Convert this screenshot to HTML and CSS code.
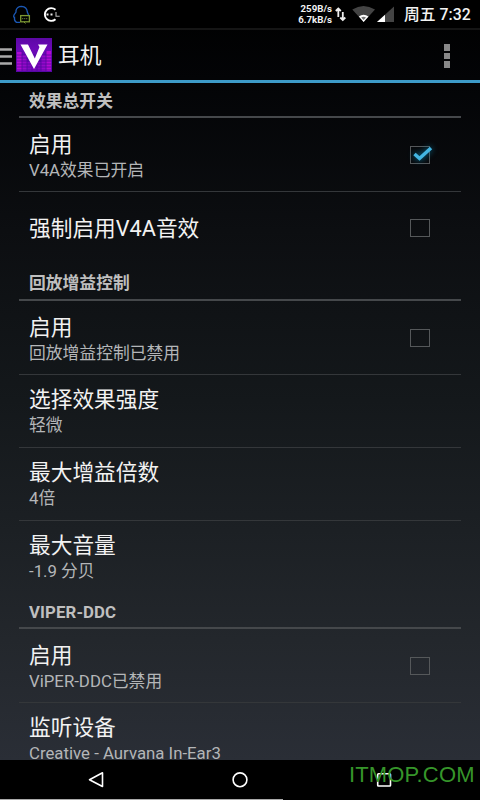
FILE: index.html
```html
<!DOCTYPE html>
<html lang="zh-CN">
<head>
<meta charset="utf-8">
<title>耳机</title>
<link rel="stylesheet" href="styles.css">
</head>
<body>
<div class="screen">
  <header class="status">
    <svg class="notices" width="64" height="28" viewBox="0 0 64 28" fill="none">
      <path d="M20 22.300H16.500Q14 21 14.500 17.500Q13.200 17.500 14 15L16 12V10.500Q17 6.300 21.500 6.300Q27 6.800 27.300 12L28.600 15" stroke="#1b58b5" stroke-width="1.300"/>
      <rect x="20.700" y="15.600" width="8.700" height="6.200" stroke="#7c9833" stroke-width="1.300"/>
      <path d="M22 18.700h6" stroke="#657d31" stroke-dasharray="1.300 .7"/>
      <path d="M24 22l1.500 1.500" stroke="#7c9833"/>
      <path d="M55.500 9.700A6.400 6.400 0 1 0 55.500 19.300" stroke="#fff" stroke-width="1.900"/>
      <path d="M46.500 14.500h2M50.500 14.500h2" stroke="#eee" stroke-width="2"/>
      <path d="M56 12v4.300h3.700" stroke="#bbb" stroke-width="1.100"/>
    </svg>
    <div class="rate"><span>259B/s</span><span>6.7kB/s</span></div>
    <svg class="signals" width="62" height="28" viewBox="0 0 62 28">
      <path d="M5.300 17V9M2.800 11L5.300 8.500l2.500 2.500M9.800 12v8M7.300 17.500L9.800 20l2.500-2.500" fill="none" stroke="#eee" stroke-width="1.800"/>
      <path d="M19.300 9.600Q30.500 2.400 42 9.600L30.600 22z" fill="#444"/>
      <path d="M25.800 16.500Q30.600 12.800 35.500 16.500L30.600 22z" fill="#fff"/>
      <path d="M28.200 17.600Q30.600 16 33 17.600L30.600 20z" fill="#777"/>
      <path d="M61 6.500V22H44z" fill="#444"/>
      <path d="M52 14.700V22H44z" fill="#fff"/>
    </svg>
    <div class="clock">周五 7:32</div>
  </header>
  <div class="actionbar">
    <svg width="52" height="50" viewBox="0 0 52 50">
      <defs><linearGradient id="g" x2="0" y2="1"><stop stop-color="#5c08a5"/><stop offset=".35" stop-color="#6c09b8"/><stop offset="1" stop-color="#5608a5"/></linearGradient></defs>
      <path d="M0 19.500h12M0 26.500h12M0 33.500h12" stroke="#aaa" stroke-width="2.300"/>
      <rect x="16" y="8" width="36" height="34" fill="url(#g)"/>
      <path d="M17 22h5v19h-5zM46 21h5v20h-5z" fill="#b30bd3"/>
      <path d="M22 25h5v16h-5zM41 25h5v16h-5z" fill="#9509ca"/>
      <path d="M27 32h14v9H27z" fill="#8208c1"/>
      <path d="M16 25h36M16 28h36M16 31h36M16 34h36M16 37h36M16 40h36M22 21v20M27 25v16M32 35v6M37 35v6M41 25v16M46 21v20" stroke="#53099e" stroke-width=".8"/>
      <path d="M20.500 14.500H28L34.800 28.500L39.500 17L38 14.500H47.500L34 39z" fill="#fff"/>
    </svg>
    <h1>耳机</h1>
    <div class="more"><i></i><i></i><i></i></div>
  </div>
  <main class="list">
    <h2>效果总开关</h2>
    <section class="row"><div><h3>启用</h3><p>V4A效果已开启</p></div>
      <span class="box"><svg class="tick" width="28" height="24" viewBox="0 0 28 24"><path d="M6.500 13L11.500 17.500L23 7" fill="none" stroke="#43b5e2" stroke-width="3.500"/></svg></span>
    </section>
    <section class="row"><div><h3>强制启用V4A音效</h3></div><span class="box"></span></section>
    <h2 class="gain">回放增益控制</h2>
    <section class="row"><div><h3>启用</h3><p>回放增益控制已禁用</p></div><span class="box"></span></section>
    <section class="row"><div><h3>选择效果强度</h3><p>轻微</p></div></section>
    <section class="row"><div><h3>最大增益倍数</h3><p>4倍</p></div></section>
    <section class="row"><div><h3>最大音量</h3><p>-1.9 分贝</p></div></section>
    <h2 class="ddc">VIPER-DDC</h2>
    <section class="row"><div><h3>启用</h3><p>ViPER-DDC已禁用</p></div><span class="box"></span></section>
    <section class="row"><div><h3>监听设备</h3><p>Creative - Aurvana In-Ear3</p></div></section>
  </main>
  <nav class="nav">
    <svg width="480" height="40" viewBox="0 0 480 40" fill="none" stroke="#fff" stroke-width="1.600">
      <path d="M102.500 12.800V26.500L89.500 19.700z" stroke-linejoin="round"/>
      <circle cx="240" cy="19.800" r="6.900"/>
      <rect x="377.700" y="13.700" width="12.800" height="12.300" rx=".8"/>
      <path d="M0 39.500h283" stroke="#aaa" stroke-width="1"/>
    </svg>
    <span class="watermark">ITMOP.COM</span>
  </nav>
</div>
</body>
</html>
```

FILE: styles.css
```css
* { box-sizing: border-box; }
body, h1, h2, h3, p { margin: 0; }
body {
  width: 480px;
  height: 800px;
  overflow: hidden;
  background: #000;
  color: #f2f2f2;
  font-family: Roboto, "Noto Sans CJK SC", sans-serif;
}
.screen {
  height: 800px;
  display: flex;
  flex-direction: column;
  background: linear-gradient(#000 0, #030406 80px, #0c0e11 230px, #14181b 400px, #1c2024 530px, #23272c 640px, #2a2e36 760px);
}
.status {
  height: 30px;
  flex: none;
  display: flex;
  background: #000;
  border-bottom: 2px solid #151515;
}
.rate {
  width: 268px;
  padding-top: 4px;
  display: flex;
  flex-direction: column;
  align-items: flex-end;
  font-size: 9.7px;
  line-height: 10.5px;
  font-weight: 700;
}
.signals { margin-left: 1px; flex: none; }
.clock {
  margin-left: 9px;
  font-size: 15.8px;
  line-height: 29px;
  font-weight: 500;
  white-space: nowrap;
}
.actionbar {
  height: 53px;
  flex: none;
  display: flex;
  border-bottom: 3px solid #3d9bc8;
}
.actionbar h1 {
  flex: 1;
  margin-left: 6px;
  font-size: 21.7px;
  line-height: 51px;
  font-weight: 400;
}
.more {
  width: 6px;
  margin: 14px 30px 0 0;
  display: flex;
  flex-direction: column;
  gap: 2px;
}
.more i { height: 6.500px; background: #888; }
.list {
  height: 677px;
  flex: none;
  padding: 0 19px;
  overflow: hidden;
}
.list h2 {
  height: 35px;
  padding-left: 10px;
  border-bottom: 2px solid #45484b;
  color: #bfbfbf;
  font-size: 16.8px;
  line-height: 36px;
  font-weight: 700;
}
.list .gain { height: 37px; line-height: 38px; }
.list .ddc { height: 36px; line-height: 38px; letter-spacing: .1px; }
.row {
  height: 73px;
  padding: 0 31px 0 10px;
  display: flex;
  align-items: center;
  justify-content: space-between;
}
.row + .row { border-top: 1px solid #34373a; }
.row h3 {
  font-size: 21.7px;
  line-height: 28px;
  font-weight: 400;
}
h2 + .row h3 { padding-top: 2px; }
.row h3:only-child { padding-top: 1px; }
.row p {
  color: #b4b6b8;
  font-size: 16.8px;
  line-height: 22px;
}
.box {
  position: relative;
  width: 20px;
  height: 18px;
  border: 1px solid #55585a;
}
.tick {
  position: absolute;
  left: -3px;
  top: -6px;
  filter: drop-shadow(0 0 3px #087da8);
}
.nav {
  position: relative;
  height: 40px;
  flex: none;
  background: #000;
}
.nav svg { display: block; }
.watermark {
  position: absolute;
  left: 349px;
  top: 3px;
  color: #36952a;
  font: 22px/24px "Liberation Sans", sans-serif;
  letter-spacing: .15px;
}
```
